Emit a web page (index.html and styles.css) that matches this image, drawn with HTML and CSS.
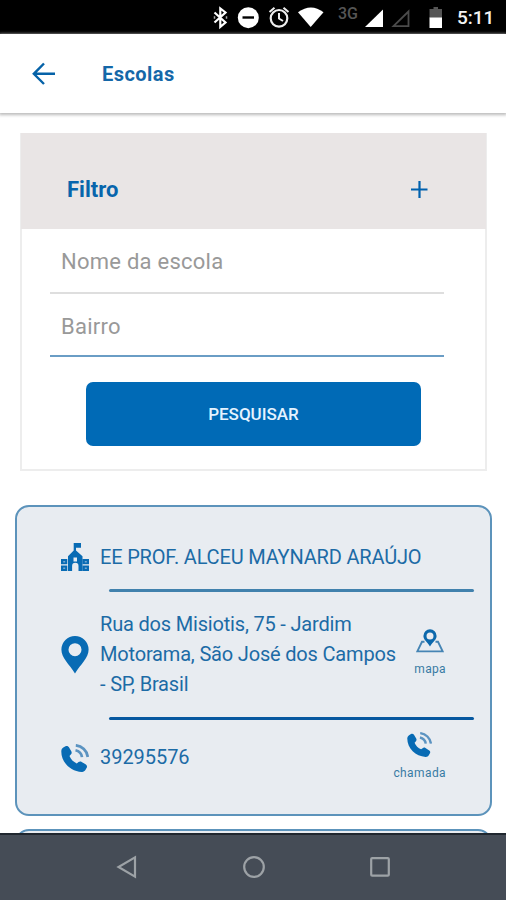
FILE: index.html
```html
<!DOCTYPE html>
<html lang="pt-BR">
<head>
<meta charset="utf-8">
<meta name="viewport" content="width=device-width, initial-scale=1">
<title>Escolas</title>
<link rel="stylesheet" href="styles.css">
</head>
<body>
<div class="status">
  <svg class="status-icons" width="246" height="34" viewBox="200 0 246 34" aria-hidden="true">
    <path d="M214.500 12.500l11 10-5.200 4.300V8.500l5.200 4-11 10" fill="none" stroke="#fff" stroke-width="2.200"/>
    <path d="M214.500 16.300v2.500M226.500 16.300v2.500" stroke="#aaa" stroke-width="1.500"/>
    <circle cx="248.300" cy="17.700" r="10.500" fill="#fff"/>
    <path d="M242.500 17.500h11.500" stroke="#000" stroke-width="2.400"/>
    <circle cx="279" cy="18.300" r="8.300" fill="none" stroke="#eee" stroke-width="2.200"/>
    <path d="M279 13v5.500l4 2.500M269.500 12l5-4.300M283.500 7.700l5 4.300" fill="none" stroke="#eee" stroke-width="2"/>
    <path d="M298 12.300Q311 2.500 323.500 12.300L310.700 27z" fill="#fff"/>
    <path d="M383 9.500V27h-18z" fill="#fff"/>
    <path d="M408.500 11.500v14.700h-15z" fill="none" stroke="#4b4b4b" stroke-width="1.800"/>
    <path d="M429.500 9h4V7h4.500v2h4v9h-12.500z" fill="#555"/>
    <path d="M429.500 17.500h12.500V28h-12.500z" fill="#fff"/>
  </svg>
  <span class="network">3G</span>
  <span class="clock">5:11</span>
</div>

<header class="appbar">
  <svg class="back" width="24" height="24" viewBox="0 0 24 24" aria-hidden="true"><path d="M23 11.800H2M12 1.500L1.800 11.800 12 22" fill="none" stroke="#0562a8" stroke-width="2.400"/></svg>
  <h1 class="title">Escolas</h1>
</header>

<main class="content">
  <section class="filter">
    <div class="filter-head">
      <h2 class="filter-title">Filtro</h2>
      <svg width="18" height="18" viewBox="0 0 18 18" aria-hidden="true"><path d="M1 8.500h16.500M9.500 0v17" stroke="#0061ae" stroke-width="2.200"/></svg>
    </div>
    <div class="filter-body">
      <div class="field">Nome da escola</div>
      <div class="field field-active">Bairro</div>
      <button class="search" type="button">PESQUISAR</button>
    </div>
  </section>

  <article class="school">
    <div class="row row-name">
      <svg class="lead" width="28" height="28" viewBox="0 0 28 28" aria-hidden="true">
        <path fill="#086bb4" fill-rule="evenodd" d="M12.700 0h7.300v4.800h-5V7.500l6.500 5.800V28H17.500v-5a3.200 3.200 0 0 0-6.400 0v5H7V13.300l5.700-5.800zM12.500 14.500v4h3.500v-4zM0 16h6.300v5.300H0zM21.700 16H28v5.300h-6.300zM0 22.500h6.300V28H0zM21.700 22.500H28V28h-6.300z"/>
        <path fill="#78a9d1" d="M2.200 18h2v1.500h-2zM23.800 18h2v1.500h-2zM2.200 24.500h2V26h-2zM23.800 24.500h2V26h-2z"/>
      </svg>
      <p class="info info-name">EE PROF. ALCEU MAYNARD ARAÚJO</p>
    </div>
    <hr class="rule">
    <div class="row row-address">
      <svg class="lead" width="28" height="38" viewBox="0 0 28 38" aria-hidden="true"><path fill="#086bb4" fill-rule="evenodd" d="M14 0a13.600 13.600 0 0 1 13.600 13.600C27.600 22 20 28 14 37.500 8 28 .4 22 .4 13.600A13.600 13.600 0 0 1 14 0zM14 7.200a6.500 6.500 0 1 0 0 13 6.500 6.500 0 0 0 0-13z"/></svg>
      <p class="info info-address">Rua dos Misiotis, 75 - Jardim<br>Motorama, São José dos Campos<br>- SP, Brasil</p>
      <div class="action action-map">
        <svg width="28" height="24" viewBox="0 0 28 24" aria-hidden="true"><path d="M8.500 12.800H6L1.300 22.400h25.400L22 12.800h-2.500" fill="none" stroke="#4584b4" stroke-width="1.900"/><path fill="#0c68ac" fill-rule="evenodd" d="M14 .3a6.600 6.600 0 0 1 6.600 6.600C20.600 10.600 17 12.500 14 17.500 11 12.500 7.400 10.600 7.400 6.900A6.600 6.600 0 0 1 14 .3zM14 3.400a3.500 3.500 0 1 0 0 7 3.500 3.500 0 0 0 0-7z"/></svg>
        <span class="action-label label-map">mapa</span>
      </div>
    </div>
    <hr class="rule rule-strong">
    <div class="row row-phone">
      <svg class="lead phone" width="28" height="28" viewBox="0 0 28 28" aria-hidden="true"><use href="#call"/></svg>
      <p class="info info-phone">39295576</p>
      <div class="action action-call">
        <svg width="25" height="25" viewBox="0 0 28 28" aria-hidden="true">
          <g id="call"><path fill="#086bb4" d="M2.300 3.500L4.500 2.200c1.200-.6 2.600-.2 3.300.9l2.500 4.200c.7 1.200.4 2.400-.5 3.300L8.500 12c1.200 3.300 4 6 7.300 7.400l1.700-1.300c1-.8 2.200-.8 3.200-.2l4.200 2.700c1.100.8 1.500 2.100.8 3.200l-1.300 2.300c-.8 1.300-2 1.900-3.600 1.800C9.700 27.600.3 18.500.3 7.400c0-1.700.7-3.100 2-3.900z"/><path d="M14.500 6.200c3.500.7 6 3.500 6.500 6.900" fill="none" stroke="#5b93c1" stroke-width="2.700"/><path d="M14.800 1.300c6.200.6 11.200 5.500 12 11.700" fill="none" stroke="#5b93c1" stroke-width="2.700"/></g>
        </svg>
        <span class="action-label label-call">chamada</span>
      </div>
    </div>
  </article>
  <article class="school"></article>
</main>

<nav class="navbar">
  <svg width="22" height="24" viewBox="0 0 22 24" aria-hidden="true"><path d="M19 2.300v19.400L2.500 12z" fill="none" stroke="#9da2a6" stroke-width="2.200"/></svg>
  <svg width="24" height="24" viewBox="0 0 24 24" aria-hidden="true"><circle cx="12" cy="12" r="9.800" fill="none" stroke="#9da2a6" stroke-width="2.200"/></svg>
  <svg width="22" height="24" viewBox="0 0 22 24" aria-hidden="true"><rect x="2.200" y="3.100" width="17.600" height="17.600" rx="1" fill="none" stroke="#9da2a6" stroke-width="2.200"/></svg>
</nav>
</body>
</html>
```
FILE: styles.css
```css
* { box-sizing: border-box; }
body {
  margin: 0;
  height: 900px;
  overflow: hidden;
  display: flex;
  flex-direction: column;
  background: #fff;
  color: #1c6ba6;
  font-family: Roboto, "Liberation Sans", sans-serif;
}
h1, h2, p { margin: 0; }
svg { display: block; flex: none; }

.status {
  position: relative;
  flex: none;
  height: 34px;
  display: flex;
  align-items: center;
  padding-left: 200px;
  background: #000;
}
.network {
  position: absolute;
  left: 338px;
  top: 4px;
  color: #555;
  font-size: 16px;
  font-weight: 500;
  line-height: 19px;
}
.clock {
  margin-left: 11px;
  padding-top: 1px;
  color: #f4f4f4;
  font-size: 19px;
  font-weight: 500;
}

.appbar {
  position: relative;
  flex: none;
  height: 79px;
  display: flex;
  align-items: center;
  padding-left: 32px;
  box-shadow: 0 1px 3px 1px #bbb;
}
.title {
  margin-left: 46px;
  color: #1467a8;
  font-size: 20px;
  font-weight: 700;
  letter-spacing: .45px;
}

.content {
  flex: 1;
  min-height: 0;
  overflow: hidden;
  padding: 20px 14px 0 15px;
}
.filter {
  height: 338px;
  margin: 0 5px 34px;
  border: 2px solid #ededed;
  border-top: 0;
}
.filter-head {
  height: 96px;
  margin: 0 -1px;
  display: flex;
  align-items: center;
  justify-content: space-between;
  padding: 17px 58px 0 46px;
  background: #e9e5e5;
}
.filter-title {
  color: #0865ac;
  font-size: 22px;
  font-weight: 700;
}
.filter-body {
  display: flex;
  flex-direction: column;
  padding: 0 41px 0 28px;
}
.field {
  height: 65px;
  padding: 0 11px;
  border-bottom: 2px solid #dedede;
  color: #999;
  font-size: 22px;
  letter-spacing: .25px;
  line-height: 66px;
}
.field-active {
  height: 63px;
  border-color: #6a9dc5;
}
.search {
  height: 64px;
  margin: 25px 23px 0 36px;
  padding: 0;
  border: 0;
  border-radius: 7px;
  background: #006ab6;
  color: #e5f3ff;
  font: 500 17px Roboto, sans-serif;
}

.school {
  height: 311px;
  margin-bottom: 13px;
  padding: 0 16px 0 43px;
  border: 2px solid #5c93bb;
  border-radius: 14px;
  background: #e8ecf1;
}
.row {
  display: flex;
  align-items: flex-start;
}
.lead { margin-left: 1px; }
.info {
  flex: 1;
  margin-left: 11px;
  font-size: 20px;
  letter-spacing: -.18px;
  line-height: 30px;
  white-space: nowrap;
}
.row-name {
  height: 82px;
  align-items: center;
  padding-top: 18px;
}
.rule {
  height: 3px;
  margin: 0 0 0 49px;
  border: 0;
  border-radius: 2px;
  background: #4181ad;
}
.rule-strong { background: #0658a0; }
.row-address {
  height: 125px;
  align-items: center;
}
.info-address { margin-top: -2px; }
.action {
  flex: none;
  display: flex;
  flex-direction: column;
}
.action-label {
  font-size: 12px;
  line-height: 16px;
  color: #397ba4;
}
.action-map {
  align-items: center;
  padding-right: 28px;
  margin-top: -4px;
}
.label-map {
  margin-top: 8px;
  letter-spacing: .35px;
}
.row-phone { padding-top: 12px; }
.phone { margin-top: 12px; }
.info-phone {
  margin-top: 10px;
  letter-spacing: -.05px;
}
.action-call {
  align-items: center;
  padding-right: 28px;
}
.label-call {
  margin-top: 8px;
  letter-spacing: .4px;
}

.navbar {
  position: relative;
  flex: none;
  height: 67px;
  display: flex;
  align-items: center;
  justify-content: space-between;
  padding: 0 115px 2px 116px;
  border-top: 2px solid #20272f;
  background: #454c56;
}
```
